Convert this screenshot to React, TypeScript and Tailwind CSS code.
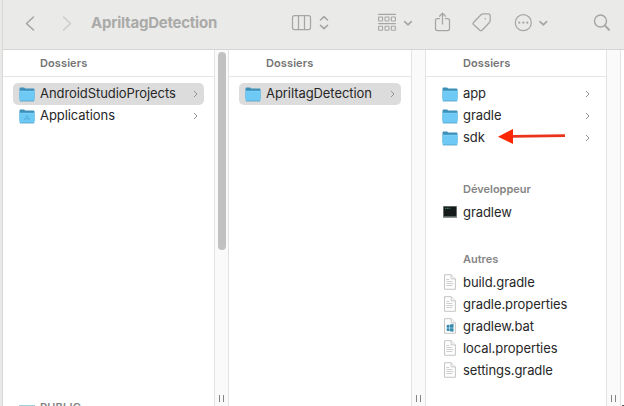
import type { ReactNode } from "react";

function Folder({ app = false }: { app?: boolean }) {
  return (
    <svg width="16" height="15" viewBox="0 0 16 15" className="shrink-0">
      <path d="M.5 1.5Q.5.5 1.5.5H5l1.3 1.1h8.2q1 0 1 1V12H.5Z" fill="#3d91b9" />
      <path d="M.5 4h15v9q0 1-1 1h-13q-1 0-1-1Z" fill="#6ec9f5" />
      <path d="M.5 4.2h15" stroke="#84d5fa" strokeWidth=".7" />
      <path d="M.8 14h14.4" stroke="#4b9fc8" strokeWidth=".8" />
      {app && <path d="m5.7 11 2.4-4.6 2.4 4.6M5.3 9.8h5.6" fill="none" stroke="#50aedb" strokeWidth=".8" />}
    </svg>
  );
}

function FileIcon({ windows = false }: { windows?: boolean }) {
  return (
    <svg width="16" height="16" viewBox="0 0 16 16" className="shrink-0">
      <path d="M2.5.7h6.7l4.2 4.2v10.4H2.5Z" fill="#fdfdfd" stroke="#c0c0c0" strokeWidth=".9" />
      <path d="M9.2.7v4.2h4.2" fill="#f3f3f3" stroke="#c0c0c0" strokeWidth=".8" />
      {windows ? (
        <path d="m4.7 7.1 2.8-.4v3H4.7Zm3.3-.5 3.5-.5v3.6H8Zm-3.3 3.6h2.8v3l-2.8-.4Zm3.3 0h3.5v3.6L8 13.3Z" fill="#3289ae" />
      ) : (
        <path d="M4.3 5.5h3M4.3 7.5h6M4.3 9.5h7M4.3 11.5h6" stroke="#c3c3c3" strokeWidth=".8" />
      )}
    </svg>
  );
}

function Terminal() {
  return (
    <svg width="16" height="14" viewBox="0 0 16 14" className="shrink-0">
      <path d="M1 1h14v12H1Z" fill="#8c9492" />
      <path d="M1.7 1.6h12.6v9.8H1.7Z" fill="#151b1b" />
      <path d="M3 3.3h5" stroke="#4c9b72" strokeWidth=".9" strokeDasharray="1.3 .5" />
    </svg>
  );
}

function Row({ icon, name, arrow, selected, children }: {
  icon: ReactNode; name: string; arrow?: boolean; selected?: boolean; children?: ReactNode;
}) {
  return (
    <div className={`mx-[10px] flex h-[22px] items-center rounded-[5px] px-[6px] ${selected ? "bg-[#dcdcdc]" : ""}`}>
      {icon}
      <span className={`ml-[5px] text-[13px] leading-[22px] tracking-[-0.07px] whitespace-nowrap text-[#272727] ${arrow ? "mb-[2px]" : ""}`}>{name}</span>
      {children}
      {arrow && (
        <svg width="5" height="8" viewBox="0 0 5 8" className="ml-auto shrink-0">
          <path d="m1 1 3 3-3 3" fill="none" stroke="#929292" strokeWidth="1" />
        </svg>
      )}
    </div>
  );
}

function Header() {
  return <div className="mb-[6px] h-[27px] border-b border-[#e4e4e4] pl-[37px] text-[11px] leading-[27px] font-semibold tracking-[0.1px] text-[#747474]">Dossiers</div>;
}

function Divider({ scroll = false }: { scroll?: boolean }) {
  return (
    <div className="flex w-[15px] shrink-0 flex-col items-center border-x border-[#e3e3e3] bg-[#fafafa]">
      {scroll && <div className="mt-[2px] h-[198px] w-[8px] rounded-full bg-[#c1c1c1]" />}
      <div className="mt-auto mb-[4px] h-[7px] w-[5px] border-x border-[#858585]" />
    </div>
  );
}

function Toolbar() {
  return (
    <div className="flex h-[50px] items-center border-b border-[#d5d5d4] bg-[#eaeae8] text-[#a6a6a5]">
      <svg width="50" height="18" viewBox="23 14 50 18" className="mb-[2px] ml-5" fill="none" strokeWidth="1.6" strokeLinecap="round" strokeLinejoin="round">
        <path d="m33.5 16-7 6.5 7 6.5" stroke="#a5a5a4" />
        <path d="m63.5 16 7 6.5-7 6.5" stroke="#cdcdcb" />
      </svg>
      <div className="mb-[3px] ml-[18px] text-[15px] leading-[20px] font-bold tracking-[-0.23px] text-[#aaaaa9]">ApriltagDetection</div>
      <svg width="324" height="26" viewBox="288 10 324 26" className="mr-3 mb-[3px] ml-auto" fill="none" stroke="currentColor" strokeWidth="1.25" strokeLinecap="round" strokeLinejoin="round">
        <rect x="292.5" y="15.5" width="18" height="14" rx="2" />
        <path d="M298.5 15.5v14m6-14v14" />
        <path d="m320.5 20 3.5-3.3 3.5 3.3m-7 5.3 3.5 3.3 3.5-3.3" strokeWidth="1.6" />
        <path d="M378.5 14.3h17m-17 9.3h17" />
        <g strokeWidth="1.1">
          <rect x="378.6" y="17" width="4" height="4" rx=".5" /><rect x="385" y="17" width="4" height="4" rx=".5" /><rect x="391.4" y="17" width="4" height="4" rx=".5" />
          <rect x="378.6" y="26.3" width="4" height="4" rx=".5" /><rect x="385" y="26.3" width="4" height="4" rx=".5" /><rect x="391.4" y="26.3" width="4" height="4" rx=".5" />
        </g>
        <path d="m404.7 21.7 3.3 3.1 3.3-3.1m128.7 0 3.3 3.1 3.3-3.1" strokeWidth="1.7" />
        <path d="M439.5 18.5h-2q-2 0-2 2v8q0 2 2 2h10q2 0 2-2v-8q0-2-2-2h-2M442.5 24V13.2m-3 3 3-3 3 3" />
        <path d="m473.5 22.5 7.5-7.7q1-1 2.5-1h4.6q2.1 0 2.1 2.1v4.4q0 1.4-1 2.5l-7.2 7.5q-1.1 1-2.2 0l-6.3-5.8q-1-1 0-2Z" />
        <circle cx="485.3" cy="18.8" r=".8" fill="currentColor" stroke="none" />
        <circle cx="523.3" cy="22.7" r="8" />
        <g fill="currentColor" stroke="none"><circle cx="519.3" cy="22.7" r="1.1" /><circle cx="523.3" cy="22.7" r="1.1" /><circle cx="527.3" cy="22.7" r="1.1" /></g>
        <circle cx="600.5" cy="21" r="6" strokeWidth="1.4" />
        <path d="m605 25.6 4 4.2" strokeWidth="2" />
      </svg>
    </div>
  );
}

const files = [
  { name: "build.gradle" },
  { name: "gradle.properties" },
  { name: "gradlew.bat", windows: true },
  { name: "local.properties" },
  { name: "settings.gradle" },
];

export default function App() {
  return (
    <div className="flex h-[406px] w-[624px] overflow-hidden bg-white font-['Inter',sans-serif]">
      <div className="w-[3px] shrink-0 border-r border-[#d8d8d7] bg-[#e9e9e8]" />
      <div className="flex min-w-0 grow flex-col">
        <Toolbar />
        <div className="flex min-h-0 grow">
          <div className="flex w-[211px] shrink-0 flex-col overflow-hidden">
            <Header />
            <Row icon={<Folder />} name="AndroidStudioProjects" arrow selected />
            <Row icon={<Folder app />} name="Applications" arrow />
            <div className="mt-auto flex h-[3px] items-start overflow-hidden pl-4">
              <div className="mt-[2px] h-px w-4 bg-[#9ed2df]" />
              <span className="ml-[5px] text-[11px] leading-[9px] font-semibold tracking-[0.2px] text-[#858585]">PUBLIC</span>
            </div>
          </div>
          <Divider scroll />
          <div className="w-[182px] shrink-0">
            <Header />
            <Row icon={<Folder />} name="ApriltagDetection" arrow selected />
          </div>
          <Divider />
          <div className="w-[180px] shrink-0">
            <Header />
            <Row icon={<Folder />} name="app" arrow />
            <Row icon={<Folder />} name="gradle" arrow />
            <Row icon={<Folder />} name="sdk" arrow>
              <svg width="69" height="15" viewBox="0 0 69 15" className="mb-[4px] ml-[13px] shrink-0">
                <path d="m14 7.3 53-.7" stroke="#eb321b" strokeWidth="2.8" />
                <path d="M0 7.8 15 0v15Z" fill="#fb2603" />
              </svg>
            </Row>
            <div className="mt-[30px] h-[22px] pl-[37px] text-[11px] leading-[20px] font-semibold text-[#858585]">Développeur</div>
            <Row icon={<Terminal />} name="gradlew" />
            <div className="mt-[26px] h-[22px] pl-[37px] text-[11px] leading-[20px] font-semibold text-[#858585]">Autres</div>
            {files.map((f) => <Row key={f.name} icon={<FileIcon windows={f.windows} />} name={f.name} />)}
          </div>
          <Divider />
          <div className="flex grow items-end justify-end"><div className="h-px w-[2px] bg-[#555]" /></div>
        </div>
      </div>
    </div>
  );
}
